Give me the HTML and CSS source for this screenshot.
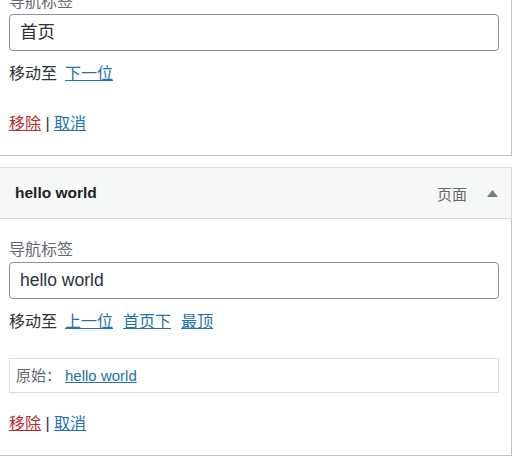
FILE: index.html
```html
<!DOCTYPE html>
<html lang="zh-CN">
<head>
<meta charset="utf-8">
<title>菜单项</title>
<link rel="stylesheet" href="styles.css">
</head>
<body>
<div class="menu">
  <div class="menu-item first">
    <div class="settings">
      <label class="field-label">导航标签</label>
      <div class="input">首页</div>
      <p class="move">移动至<a href="#">下一位</a></p>
      <div class="actions"><a class="delete" href="#">移除</a> | <a href="#">取消</a></div>
    </div>
  </div>

  <div class="menu-item">
    <div class="handle">
      <span class="title">hello world</span>
      <span class="controls">
        <span class="type">页面</span>
        <svg class="toggle" width="11" height="7" viewBox="0 0 11 7"><polygon points="5.5,0 11,7 0,7" fill="#787c82"/></svg>
      </span>
    </div>
    <div class="settings">
      <label class="field-label">导航标签</label>
      <div class="input">hello world</div>
      <p class="move">移动至<a href="#">上一位</a><a href="#">首页下</a><a href="#">最顶</a></p>
      <div class="original">原始：<a href="#">hello world</a></div>
      <div class="actions"><a class="delete" href="#">移除</a> | <a href="#">取消</a></div>
    </div>
  </div>
</div>
</body>
</html>
```

FILE: styles.css
```css
html, body {
  margin: 0;
  padding: 0;
  background: #ffffff;
}

body {
  font-family: "Liberation Sans", "Noto Sans CJK SC", sans-serif;
  font-size: 16px;
  color: #3c434a;
  overflow: hidden;
}

.menu {
  width: 513px;
  margin-left: -1px;
}

.menu-item.first {
  margin-top: -30px;
}

.menu-item + .menu-item {
  margin-top: 11px;
}

.handle {
  height: 50px;
  background: #f6f7f7;
  border: 1px solid #dcdcde;
  display: flex;
  align-items: center;
  justify-content: space-between;
  padding: 0 13px 0 15px;
}

.title {
  font-size: 15.5px;
  font-weight: bold;
  color: #1d2327;
}

.controls {
  display: flex;
  align-items: center;
  gap: 20px;
}

.type {
  font-size: 15px;
  color: #646970;
}

.toggle {
  display: block;
}

.settings {
  border: 1px solid #c3c4c7;
  border-top: none;
  padding: 21px 12px 19px 9px;
}

.menu-item.first .settings {
  border-top: 1px solid #c3c4c7;
}

.field-label {
  display: block;
  line-height: 20px;
  margin-bottom: 2px;
  color: #646970;
}

.input {
  box-sizing: border-box;
  height: 37px;
  border: 1px solid #8c8f94;
  border-radius: 4px;
  padding: 0 10px;
  font-size: 17.5px;
  line-height: 35px;
  color: #2c3338;
}

.move {
  margin: 11px 0 7px;
  line-height: 24px;
  color: #2c3338;
}

.move a {
  margin-left: 8px;
}

.move a + a {
  margin-left: 10px;
}

a {
  color: #2271b1;
  text-decoration: underline;
}

a.delete {
  color: #b32d2e;
}

.original {
  box-sizing: border-box;
  height: 35px;
  margin-top: 24px;
  border: 1px solid #dcdcde;
  padding: 0 6px;
  font-size: 15px;
  line-height: 33px;
  color: #646970;
}

.original a {
  margin-left: 4px;
}

.actions {
  padding-top: 19px;
  line-height: 24px;
  color: #2c3338;
}
```
